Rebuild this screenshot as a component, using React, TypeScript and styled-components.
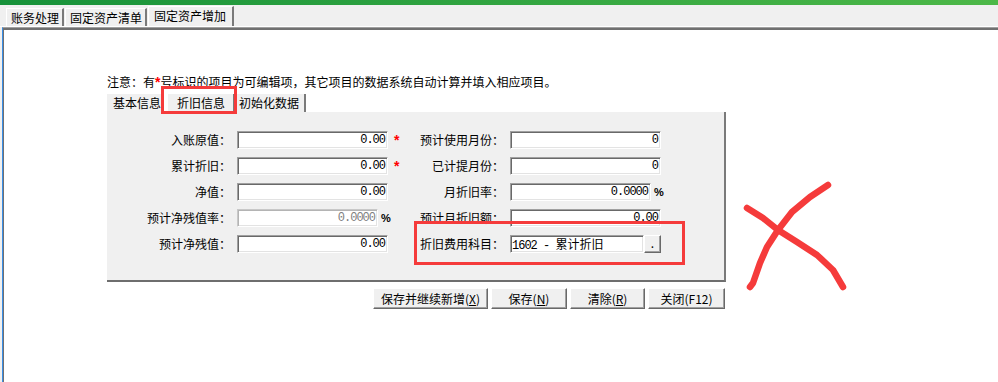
import React from 'react'
import styled, { createGlobalStyle } from 'styled-components'

const GlobalStyle = createGlobalStyle`
  html, body {
    margin: 0;
    padding: 0;
    background: #fff;
  }
  body {
    font-family: "Noto Sans CJK SC", "Liberation Sans", sans-serif;
    font-size: 12px;
    color: #000;
  }
`

const mono = `"Liberation Mono", "Noto Sans CJK SC", monospace`

interface FieldDef {
  label: string
  value: string
  star?: boolean
  suffix?: string
  disabled?: boolean
}

const rows: [FieldDef, FieldDef][] = [
  [
    { label: '入账原值：', value: '0.00', star: true },
    { label: '预计使用月份：', value: '0' },
  ],
  [
    { label: '累计折旧：', value: '0.00', star: true },
    { label: '已计提月份：', value: '0' },
  ],
  [
    { label: '净值：', value: '0.00' },
    { label: '月折旧率：', value: '0.0000', suffix: '%' },
  ],
  [
    { label: '预计净残值率：', value: '0.0000', suffix: '%', disabled: true },
    { label: '预计月折旧额：', value: '0.00' },
  ],
]

const NumberField = ({ def }: { def: FieldDef }) => {
  if (def.suffix) {
    return (
      <FieldWrap>
        <Field $disabled={def.disabled} $short>{def.value}</Field>
        <Suffix>{def.suffix}</Suffix>
      </FieldWrap>
    )
  }
  return <Field $disabled={def.disabled}>{def.value}</Field>
}

const App = () => {
  return (
    <Page>
      <GlobalStyle />
      <TitleBar />
      <TabStrip>
        <Tab>账务处理</Tab>
        <Tab>固定资产清单</Tab>
        <Tab $active>固定资产增加</Tab>
      </TabStrip>
      <Content>
        <Form>
          <Note>
            注意：有<Star as="span">*</Star>号标识的项目为可编辑项，其它项目的数据系统自动计算并填入相应项目。
          </Note>
          <InnerTabs>
            <InnerTab $variant="first">基本信息</InnerTab>
            <InnerTab $variant="active">折旧信息</InnerTab>
            <InnerTab $variant="last">初始化数据</InnerTab>
          </InnerTabs>
          <Panel>
            <FieldGrid>
              {rows.map(([left, right], i) => (
                <React.Fragment key={i}>
                  <Label>{left.label}</Label>
                  <NumberField def={left} />
                  <Star>{left.star ? '*' : ''}</Star>
                  <Label>{right.label}</Label>
                  <NumberField def={right} />
                </React.Fragment>
              ))}
              <Label>预计净残值：</Label>
              <Field>0.00</Field>
              <Star />
              <Label>折旧费用科目：</Label>
              <FieldWrap>
                <Field $align="left">
                  1602 - <CjkText>累计折旧</CjkText>
                </Field>
                <PickButton>.</PickButton>
              </FieldWrap>
            </FieldGrid>
          </Panel>
          <Actions>
            <Button $width={115}>
              保存并继续新增(<u>X</u>)
            </Button>
            <Button $width={76}>
              保存(<u>N</u>)
            </Button>
            <Button $width={75}>
              清除(<u>R</u>)
            </Button>
            <Button $width={77}>关闭(F12)</Button>
          </Actions>

          {/* 红色批注 */}
          <TabHighlight />
          <RowHighlight />
          <CrossMark viewBox="740 180 120 115" width="120" height="115">
            <path d="M747 208 L763 218 L778 230 L797 242 L817 255 L833 270 L843 287" />
            <path d="M828 185 L810 197 L792 212 L778 230 L767 247 L760 263 L753 283 L750 287" />
          </CrossMark>
        </Form>
      </Content>
    </Page>
  )
}

const Page = styled.div`
  width: 998px;
  height: 382px;
  display: flex;
  flex-direction: column;
  overflow: hidden;
  background: #f0f0f0;
`
const TitleBar = styled.div`
  flex: none;
  height: 5px;
  background: linear-gradient(to right, #17923a, #4db848);
`
const TabStrip = styled.div`
  flex: none;
  height: 21px;
  display: flex;
  align-items: flex-end;
  padding-left: 6px;
  border-bottom: 1px solid #fff;
`
const Tab = styled.div<{ $active?: boolean }>`
  height: ${(p) => (p.$active ? 20 : 18)}px;
  line-height: ${(p) => (p.$active ? 18 : 17)}px;
  box-sizing: border-box;
  padding: 0 ${(p) => (p.$active ? 6 : 3)}px 0 ${(p) => (p.$active ? 5 : 4)}px;
  border-top: 1px solid #fff;
  border-left: 1px solid #fff;
  border-right: 2px solid #7a7a7a;
  margin-right: 1px;
  white-space: nowrap;
  font-size: 12px;
`
const Content = styled.div`
  flex: 1;
  margin-left: 2px;
  background: #fff;
  border-left: 1px solid #3a8ee6;
  border-top: 1px solid #a0a0a0;
  box-shadow: inset 1px 2px #707070;
  padding: 45px 0 0 104px;
`
const Form = styled.div`
  position: relative;
  width: 619px;
  display: flex;
  flex-direction: column;
`
const Note = styled.div`
  height: 14px;
  line-height: 14px;
  white-space: nowrap;
`
const Star = styled.div`
  color: #f00;
  font-size: 14px;
  line-height: 18px;
  font-family: "Liberation Sans", sans-serif;
  font-weight: bold;
`
const InnerTabs = styled.div`
  margin-top: 7px;
  height: 18px;
  display: flex;
`
const InnerTab = styled.div<{ $variant: 'first' | 'active' | 'last' }>`
  height: 18px;
  line-height: 18px;
  box-sizing: border-box;
  background: #f0f0f0;
  white-space: nowrap;
  padding: ${(p) =>
    p.$variant === 'first' ? '0 1px 0 6px' : p.$variant === 'active' ? '0 8px 0 9px' : '0 5px 0 3px'};
  margin-right: ${(p) => (p.$variant === 'first' ? 6 : 1)}px;
  border-right: ${(p) => (p.$variant === 'first' ? 'none' : '2px solid #7a7a7a')};
`
const Panel = styled.div`
  height: 170px;
  box-sizing: border-box;
  background: #f0f0f0;
  border-right: 2px solid #7a7a7a;
  border-bottom: 2px solid #6e6e6e;
  padding-top: 19px;
`
const FieldGrid = styled.div`
  display: grid;
  grid-template-columns: 124px 151px 14px 90px 151px;
  grid-auto-rows: 18px;
  column-gap: 6px;
  row-gap: 8px;
`
const Label = styled.div`
  text-align: right;
  line-height: 18px;
  white-space: nowrap;
`
const FieldWrap = styled.div`
  display: flex;
  align-items: center;
`
const Field = styled.div<{ $disabled?: boolean; $short?: boolean; $align?: 'left' | 'right' }>`
  height: 18px;
  box-sizing: border-box;
  flex: ${(p) => (p.$short ? 'none' : '1')};
  width: ${(p) => (p.$short ? '141px' : 'auto')};
  background: #fff;
  border-top: 1px solid ${(p) => (p.$disabled ? '#c8c8c8' : '#a0a0a0')};
  border-left: 1px solid ${(p) => (p.$disabled ? '#c8c8c8' : '#a0a0a0')};
  border-bottom: 1px solid #fff;
  border-right: 1px solid #fff;
  box-shadow: inset 1px 1px ${(p) => (p.$disabled ? '#b4b4b4' : '#696969')}, inset -1px -1px #e3e3e3;
  padding: ${(p) => (p.$align === 'left' ? '0 2px 0 1px' : '0 2px 0 3px')};
  line-height: 16px;
  text-align: ${(p) => p.$align || 'right'};
  font-family: ${mono};
  font-size: 12px;
  letter-spacing: -1px;
  color: ${(p) => (p.$disabled ? '#808080' : '#000')};
  white-space: pre;
  overflow: hidden;
`
const CjkText = styled.span`
  font-family: "Noto Sans CJK SC", sans-serif;
  letter-spacing: 0;
`
const Suffix = styled.span`
  margin-left: 3px;
  font-size: 11px;
  font-family: "Liberation Sans", sans-serif;
  font-weight: bold;
`
const PickButton = styled.div`
  flex: none;
  width: 17px;
  height: 18px;
  box-sizing: border-box;
  background: #f0f0f0;
  border-top: 1px solid #fff;
  border-left: 1px solid #fff;
  border-right: 1px solid #696969;
  border-bottom: 1px solid #696969;
  box-shadow: inset -1px -1px #a0a0a0;
  text-align: center;
  line-height: 14px;
  font-size: 12px;
`
const Actions = styled.div`
  margin-top: 6px;
  display: flex;
  justify-content: flex-end;
  gap: 3px;
  padding-right: 1px;
`
const Button = styled.div<{ $width: number }>`
  width: ${(p) => p.$width}px;
  height: 21px;
  box-sizing: border-box;
  background: #f0f0f0;
  border-top: 1px solid #fff;
  border-left: 1px solid #fff;
  border-right: 1px solid #696969;
  border-bottom: 1px solid #696969;
  box-shadow: inset -1px -1px #a0a0a0;
  text-align: center;
  line-height: 19px;
  font-size: 12px;
  white-space: nowrap;
  u {
    text-decoration: underline;
  }
`
const TabHighlight = styled.div`
  position: absolute;
  left: 54px;
  top: 13px;
  width: 76px;
  height: 28px;
  box-sizing: border-box;
  border: 3px solid #f53b3b;
  pointer-events: none;
`
const RowHighlight = styled.div`
  position: absolute;
  left: 307px;
  top: 148px;
  width: 271px;
  height: 44px;
  box-sizing: border-box;
  border: 3px solid #f53b3b;
  pointer-events: none;
`
const CrossMark = styled.svg`
  position: absolute;
  left: 633px;
  top: 107px;
  fill: none;
  stroke: #f53b3b;
  stroke-width: 6.5;
  stroke-linecap: round;
  stroke-linejoin: round;
  pointer-events: none;
`

export default App
